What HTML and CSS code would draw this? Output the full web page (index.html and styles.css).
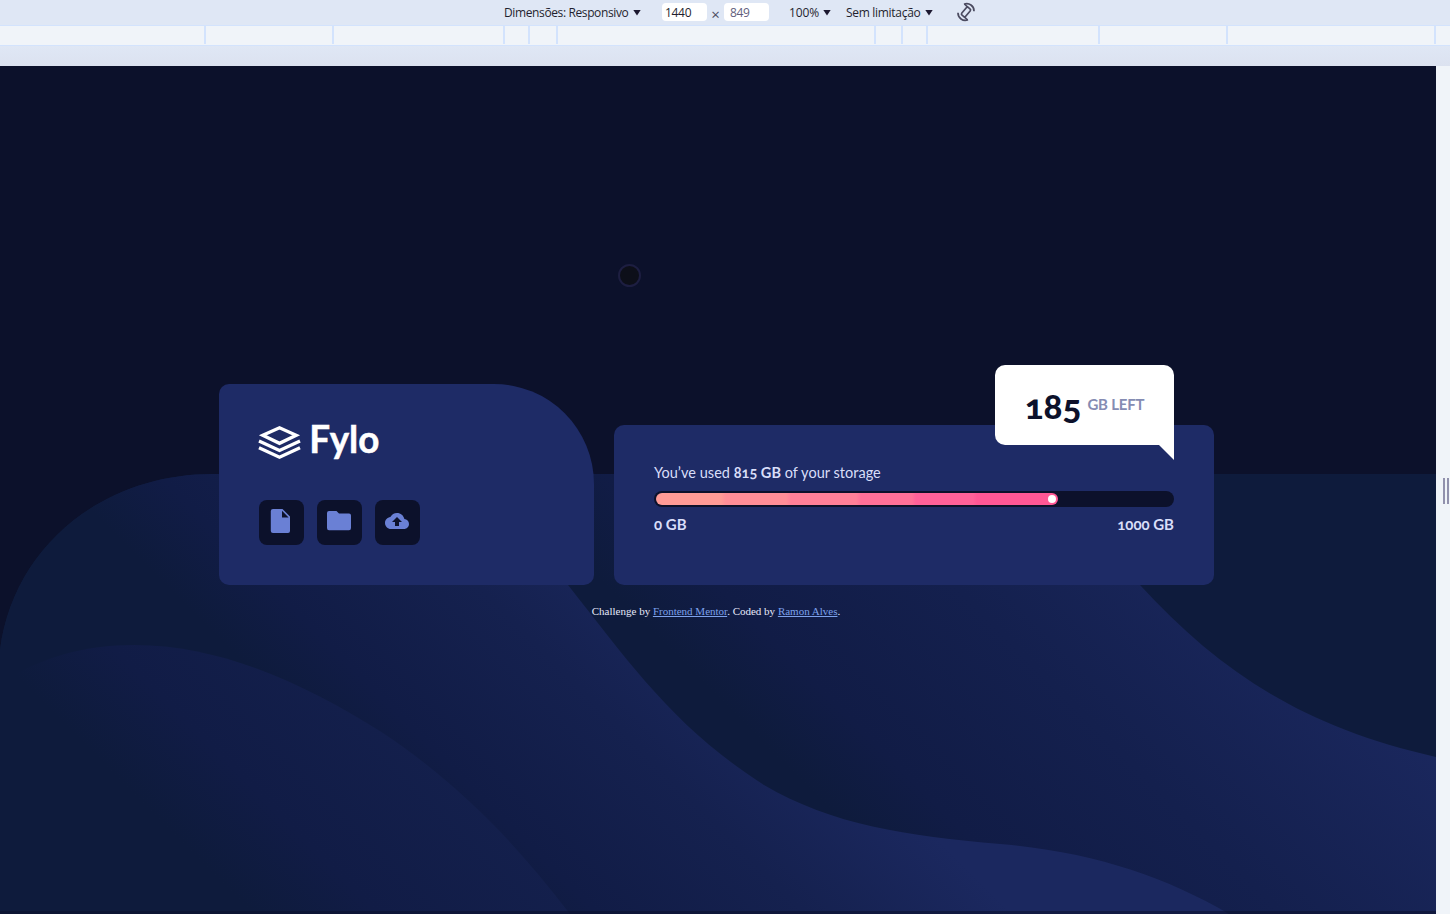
FILE: index.html
```html
<!DOCTYPE html>
<html lang="pt-BR">
<head>
<meta charset="utf-8">
<title>Fylo data storage</title>
<link rel="stylesheet" href="styles.css">
</head>
<body>
<header class="toolbar">
  <span class="label device">Dimensões: Responsivo</span><i class="caret"></i>
  <span class="field width">1440</span><span class="times">×</span><span class="field height">849</span>
  <span class="label percent">100%</span><i class="caret"></i>
  <span class="label throttle">Sem limitação</span><i class="caret"></i>
  <svg class="rotate" width="20" height="20" viewBox="0 0 20 20" fill="none" stroke="#4b4b60" stroke-width="1.7">
    <rect x="7.500" y="5" width="5" height="10" rx="1.500" transform="rotate(40 10 10)"/>
    <path d="M8 2.300C13 .300 18.200 4 18 9.300M12 17.700C7 19.700 1.800 16 2 10.700"/>
    <path d="M8.400 2l3.600 3.400M11.600 18l-3.600-3.400"/>
  </svg>
</header>
<div class="ruler">
  <svg width="1450" height="20" viewBox="0 0 1450 20" stroke="#d3e3fd" stroke-width="2"><path d="M205 1v18M333 1v18M504 1v18M529 1v18M557 1v18M875 1v18M902 1v18M927 1v18M1099 1v18M1227 1v18M1435 1v18"/></svg>
</div>
<div class="spacer"></div>
<div class="viewport">
  <main class="page">
    <svg class="waves" width="1436" height="848" viewBox="0 66 1436 848">
      <defs>
        <linearGradient id="w1" gradientUnits="userSpaceOnUse" x1="20" y1="0" x2="370" y2="-350"><stop offset="0" stop-color="#0e1b3c"/><stop offset=".16" stop-color="#111c46"/><stop offset=".5" stop-color="#14204e"/><stop offset="1" stop-color="#1b285f"/></linearGradient>
        <linearGradient id="w2" gradientUnits="userSpaceOnUse" x1="0" y1="420" x2="260" y2="160"><stop offset="0" stop-color="#0e1b3c"/><stop offset=".2" stop-color="#111c46"/><stop offset=".6" stop-color="#15214f"/><stop offset="1" stop-color="#1b285f"/></linearGradient>
        <linearGradient id="w3" gradientUnits="userSpaceOnUse" x1="0" y1="660" x2="180" y2="480"><stop offset="0" stop-color="#0e1b3c"/><stop offset=".35" stop-color="#111c46"/><stop offset="1" stop-color="#14204d"/></linearGradient>
      </defs>
      <path fill="#0e1b3c" d="M0 650C13 548 101 474 213 474H1436V914H0Z"/>
      <path fill="url(#w1)" d="M560 474H1040C1080 500 1110 550 1140 585C1219 671 1302 727 1436 757V914H560Z"/>
      <path fill="url(#w2)" d="M0 650C13 548 101 474 213 474C400 474 500 500 568 585C632 666 675 728 764 785C832 825 907 836 1000 844C1092 852 1164 876 1229 914H0Z"/>
      <path fill="url(#w3)" d="M0 683C42 657 84 645 134 645C224 645 308 686 383 733C462 786 518 846 570 914H0Z"/>
      <path fill="#0b102b" d="M0 911H1436V914H0Z" opacity=".55"/>
    </svg>
    <div class="touch"></div>
    <div class="cards">
      <section class="card brand">
        <svg class="logo" width="124" height="44" viewBox="0 0 124 44">
          <g fill="none" stroke="#fff" stroke-width="3.300">
            <path d="M3.800 15.300 20.500 7.800 37.200 15.300 20.500 23.300Z"/>
            <path d="M0 21 20.500 30.400 41 21M0 27.800 20.500 37.200 41 27.800"/>
          </g>
          <text class="wordmark" x="50.300" y="32.700" textLength="70" lengthAdjust="spacingAndGlyphs">Fylo</text>
        </svg>
        <div class="actions">
          <span class="action"><svg width="24" height="24" viewBox="0 0 24 24"><path fill="#6a80d5" fill-rule="evenodd" d="M4 0H13.500L21 7.500V22Q21 24 19 24H4Q1.800 24 1.800 22V2Q1.800 0 4 0ZM13 1.800V8.500H19.600Z"/></svg></span>
          <span class="action"><svg width="24" height="24" viewBox="0 0 24 24"><path fill="#6a80d5" d="M2 2H9.500L12 4.500H22Q24 4.500 24 6.500V19Q24 21.300 22 21.300H2Q0 21.300 0 19V4Q0 2 2 2Z"/></svg></span>
          <span class="action"><svg width="24" height="24" viewBox="0 0 24 24"><path fill="#6a80d5" fill-rule="evenodd" d="M19.350 10.040C18.670 6.590 15.640 4 12 4 9.110 4 6.600 5.640 5.350 8.040 2.340 8.360 0 10.910 0 14c0 3.310 2.690 6 6 6h13c2.760 0 5-2.240 5-5 0-2.640-2.050-4.780-4.650-4.960ZM14 13v4h-4v-4H7l5-5 5 5h-3Z"/></svg></span>
        </div>
      </section>
      <section class="card storage">
        <p class="used">You’ve used <b>815 GB</b> of your storage</p>
        <div class="track"><div class="fill"><i class="knob"></i></div></div>
        <div class="limits"><span>0 GB</span><span>1000 GB</span></div>
        <div class="bubble"><strong>185</strong><span>GB LEFT</span></div>
      </section>
    </div>
    <p class="attribution">Challenge by <a href="#">Frontend Mentor</a>. Coded by <a href="#">Ramon Alves</a>.</p>
  </main>
  <aside class="resizer"><i></i><i></i></aside>
</div>
</body>
</html>
```
FILE: styles.css
```css
* { box-sizing: border-box; }
body { margin: 0; width: 1450px; height: 914px; overflow: hidden; background: #0c112b; }
.toolbar { height: 25px; background: #dfe7f5; display: flex; align-items: center; padding-left: 504px; font: 12px/24px "Open Sans", "Noto Sans", sans-serif; color: #1f1f2e; white-space: nowrap; }
.label { letter-spacing: -.15px; }
.device { width: 125px; letter-spacing: -.38px; }
.percent { width: 30px; margin-left: 20px; }
.throttle { width: 75px; margin-left: 15px; letter-spacing: -.3px; }
.caret { width: 8px; height: 6px; margin-left: 4px; background: #1c1830; clip-path: polygon(0 0, 100% 0, 50% 100%); }
.field { width: 45px; height: 18px; margin-bottom: 1px; border-radius: 4px; background: #fff; line-height: 20px; padding-left: 3px; letter-spacing: -.3px; }
.width { margin-left: 21px; }
.height { color: #625e7c; padding-left: 6px; }
.times { width: 17px; text-align: center; font-size: 15px; padding-top: 3px; color: #4b4b60; }
.rotate { margin-left: 23px; margin-bottom: 2px; }
.ruler { height: 20px; background: #f0f4f9; border-top: 1px solid #d3e3fd; }
.ruler svg { display: block; margin-top: -1px; }
.spacer { height: 21px; border-top: 1px solid #d3e3fd; background: linear-gradient(#dfe7f5, #dce2f0); }
.viewport { display: flex; height: 848px; }
.page { position: relative; width: 1436px; height: 848px; background: #0c112b; font-family: Lato, "Open Sans", sans-serif; color: #d9def9; font-variant-numeric: oldstyle-nums; }
.waves { position: absolute; inset: 0; }
.touch { position: absolute; left: 618px; top: 198px; width: 23px; height: 23px; border-radius: 50%; background: #0d0f19; border: 2px solid #1d1e41; }
.cards { position: relative; display: flex; gap: 20px; align-items: flex-end; padding: 318px 0 0 219px; }
.card { background: #1e2b66; border-radius: 10px; }
.brand { width: 375px; height: 201px; border-top-right-radius: 100px; padding: 36px 40px; }
.logo { display: block; overflow: visible; }
.wordmark { font: 700 38px Lato, sans-serif; fill: #fff; stroke: #fff; stroke-width: .5px; }
.actions { display: flex; gap: 13px; margin-top: 36px; }
.action { width: 45px; height: 45px; border-radius: 8px; background: #0c112b; display: flex; justify-content: center; padding-top: 9px; padding-right: 2px; }
.storage { position: relative; width: 600px; height: 160px; padding: 38px 40px 0; font-size: 14.5px; }
.used { margin: 0; height: 28px; line-height: 20px; white-space: nowrap; letter-spacing: .03px; }
.track { height: 16px; padding: 2px; border-radius: 8px; background: #0c112b; }
.fill { width: 402px; height: 12px; border-radius: 6px; background: linear-gradient(90deg, #ff9b96 65px, #ff8e97 70px 130px, #ff8098 135px 200px, #ff7098 205px 256px, #ff6199 260px 317px, #ff5795 321px); display: flex; justify-content: flex-end; align-items: center; padding-right: 2px; }
.knob { width: 8px; height: 8px; border-radius: 50%; background: #fff; }
.limits { display: flex; justify-content: space-between; font-weight: 700; font-size: 15px; line-height: 20px; margin-top: 7px; }
.bubble { position: absolute; right: 40px; top: -60px; width: 179px; height: 80px; background: #fff; border-radius: 10px 10px 0 10px; display: flex; align-items: center; justify-content: center; gap: 6px; white-space: nowrap; }
.bubble::after { content: ""; position: absolute; right: 0; top: 100%; width: 15px; height: 15px; background: #fff; clip-path: polygon(0 0, 100% 0, 100% 100%); }
.bubble strong { font-size: 35px; line-height: 40px; padding-bottom: 1px; font-weight: 900; color: #0c112b; }
.bubble span { font-size: 15px; line-height: 20px; padding-bottom: 3px; font-weight: 700; letter-spacing: -.2px; color: #858cb3; }
.attribution { position: relative; margin: 20px 0 0; padding-right: 4px; text-align: center; font: 11px/13px "Liberation Serif", serif; color: #e5e8fa; }
.attribution a { color: #7da1ec; }
.resizer { width: 14px; background: #f0f4f9; display: flex; gap: 2px; padding: 412px 0 0 7px; }
.resizer i { width: 2px; height: 26px; background: #9191ad; }
```
